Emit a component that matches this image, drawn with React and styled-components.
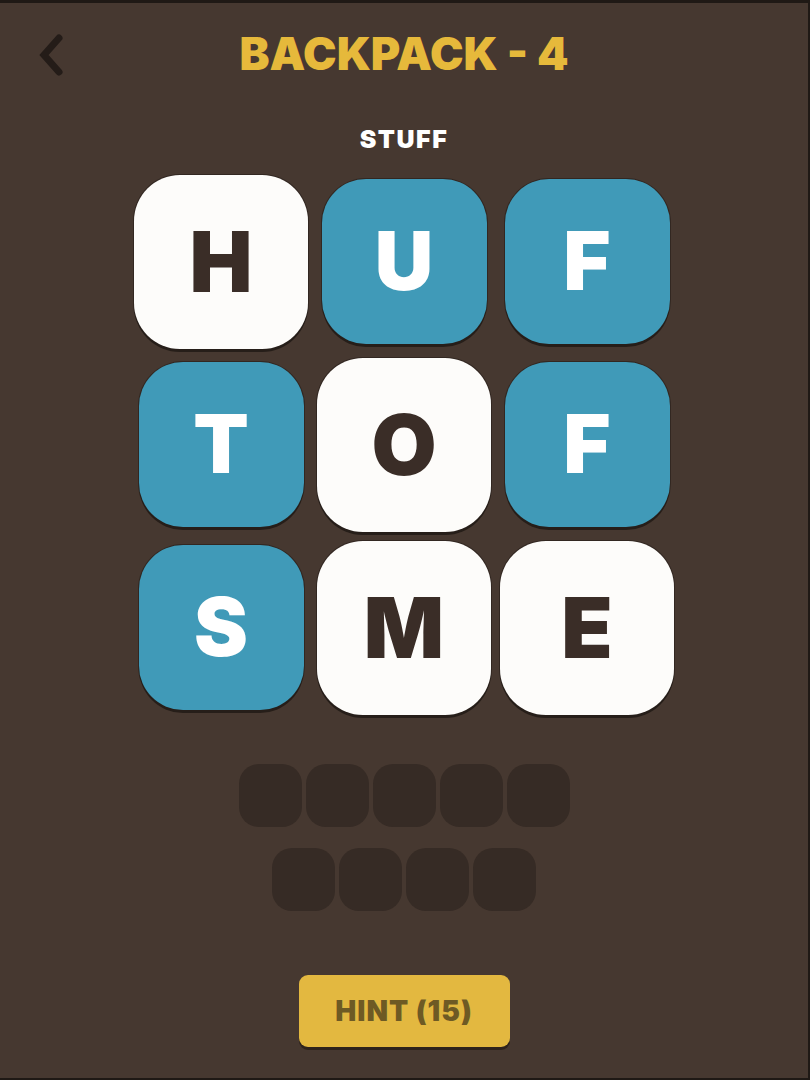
import React from "react";
import styled, { createGlobalStyle } from "styled-components";

const GlobalStyle = createGlobalStyle`
    * {
        box-sizing: border-box;
    }
    body {
        margin: 0;
        background: #463830;
        font-family: Inter, "Noto Sans", sans-serif;
    }
`;

const tiles = [
    { letter: "H", active: true },
    { letter: "U" },
    { letter: "F" },
    { letter: "T" },
    { letter: "O", active: true },
    { letter: "F" },
    { letter: "S" },
    { letter: "M", active: true },
    { letter: "E", active: true },
];

export default function App() {
    return (
        <Screen>
            <GlobalStyle />
            <Header>
                <BackButton aria-label="back">
                    <svg width="30" height="44" viewBox="0 0 30 44">
                        <polyline
                            points="22,5 7,22 22,39"
                            fill="none"
                            stroke="#241c18"
                            strokeWidth="7"
                            strokeLinecap="round"
                            strokeLinejoin="miter"
                        />
                    </svg>
                </BackButton>
                <Title>BACKPACK - 4</Title>
                <span />
            </Header>
            <Category>STUFF</Category>
            <Board>
                {tiles.map((t, i) => (
                    <Cell key={i}>
                        <Tile $active={t.active}>{t.letter}</Tile>
                    </Cell>
                ))}
            </Board>
            <Answer>
                <SlotRow>
                    {[0, 1, 2, 3, 4].map((i) => (
                        <Slot key={i} />
                    ))}
                </SlotRow>
                <SlotRow>
                    {[0, 1, 2, 3].map((i) => (
                        <Slot key={i} />
                    ))}
                </SlotRow>
            </Answer>
            <HintButton>HINT (15)</HintButton>
        </Screen>
    );
}

const Screen = styled.div`
    width: 810px;
    height: 1080px;
    background: #463830;
    border-top: 3px solid #1f1915;
    border-right: 2px solid #1f1915;
    border-bottom: 2px solid #1f1915;
    display: flex;
    flex-direction: column;
    align-items: center;
    padding-top: 26px;
    overflow: hidden;
`;

const Header = styled.div`
    width: 100%;
    display: grid;
    grid-template-columns: 1fr auto 1fr;
    align-items: center;
    height: 45px;
`;

const BackButton = styled.button`
    justify-self: start;
    margin-left: 37px;
    margin-top: 4px;
    padding: 0;
    border: none;
    background: none;
    display: flex;
    cursor: pointer;
`;

const Title = styled.h1`
    margin: 0;
    font-size: 45px;
    line-height: 1;
    font-weight: 900;
    color: #e6b93b;
    letter-spacing: 0;
`;

const Category = styled.h2`
    margin: 53px 0 0;
    font-size: 25px;
    line-height: 1;
    font-weight: 900;
    color: #ffffff;
    letter-spacing: 1.5px;
`;

const Board = styled.div`
    margin-top: 18px;
    display: grid;
    grid-template-columns: repeat(3, 183px);
    grid-auto-rows: 183px;
`;

const Cell = styled.div`
    display: flex;
    align-items: center;
    justify-content: center;
`;

const Tile = styled.div`
    width: ${(p) => (p.$active ? 174 : 165)}px;
    height: ${(p) => (p.$active ? 174 : 165)}px;
    border-radius: ${(p) => (p.$active ? 46 : 44)}px;
    background: ${(p) => (p.$active ? "#fdfcfa" : "#409ab8")};
    color: ${(p) => (p.$active ? "#3a2d27" : "#ffffff")};
    box-shadow: 0 3px 0 #261e19, 0 0 0 1px rgba(30, 22, 18, 0.5);
    display: flex;
    align-items: center;
    justify-content: center;
    font-size: ${(p) => (p.$active ? 84 : 81)}px;
    font-weight: 900;
    line-height: 1;
`;

const Answer = styled.div`
    margin-top: 45px;
    display: flex;
    flex-direction: column;
    align-items: center;
    gap: 21px;
`;

const SlotRow = styled.div`
    display: flex;
    gap: 4px;
`;

const Slot = styled.div`
    width: 63px;
    height: 63px;
    border-radius: 20px;
    background: #362b25;
`;

const HintButton = styled.button`
    margin-top: 64px;
    width: 211px;
    height: 72px;
    border: none;
    border-radius: 9px;
    background: #e3b840;
    box-shadow: 0 3px 0 #2e231c;
    color: #6e5a24;
    font-family: Inter, "Noto Sans", sans-serif;
    font-size: 28px;
    font-weight: 900;
    letter-spacing: 1px;
    cursor: pointer;
`;
